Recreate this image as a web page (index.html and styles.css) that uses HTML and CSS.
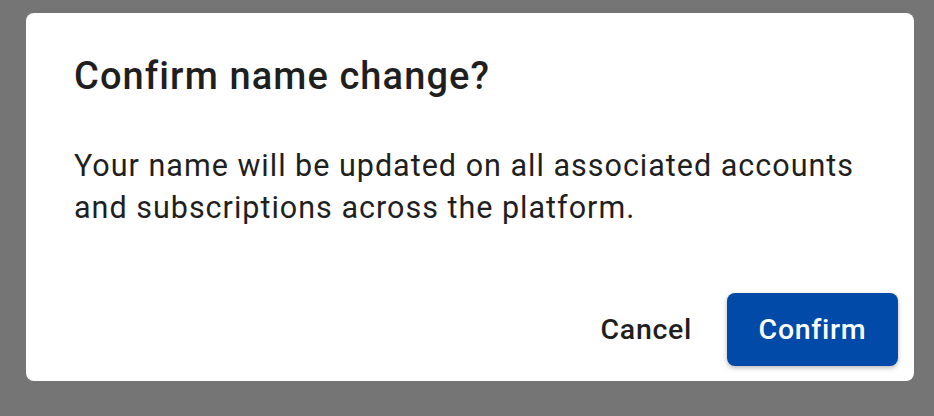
FILE: index.html
```html
<!DOCTYPE html>
<html lang="en">
<head>
<meta charset="utf-8">
<title>Confirm name change</title>
<link rel="stylesheet" href="styles.css">
</head>
<body>
<div class="dialog" role="dialog" aria-labelledby="dlg-title">
  <h2 class="dialog-title" id="dlg-title">Confirm name change?</h2>
  <p class="dialog-body">Your name will be updated on all associated accounts<br>and subscriptions across the platform.</p>
  <div class="dialog-actions">
    <button class="btn btn-text" type="button">Cancel</button>
    <button class="btn btn-primary" type="button">Confirm</button>
  </div>
</div>
</body>
</html>
```
FILE: styles.css
```css
html, body {
  margin: 0;
  height: 100%;
}
body {
  background: #757575;
  font-family: Roboto, "Liberation Sans", sans-serif;
  color: #1f1f1f;
  padding: 13px 20px 0 26px;
  box-sizing: border-box;
}
.dialog {
  background: #ffffff;
  border-radius: 8px;
  width: 888px;
  height: 368px;
  box-sizing: border-box;
  padding: 40px 16px 15px 48px;
  display: flex;
  flex-direction: column;
}
.dialog-title {
  margin: 0;
  font-size: 38px;
  line-height: 46px;
  font-weight: 500;
  letter-spacing: 1.1px;
  color: #1f1f1f;
}
.dialog-body {
  margin: 46px 0 0;
  font-size: 30.5px;
  line-height: 42px;
  font-weight: 400;
  letter-spacing: 1px;
  color: #1f1f1f;
}
.dialog-actions {
  margin-top: auto;
  display: flex;
  justify-content: flex-end;
  align-items: center;
  gap: 12px;
}
.btn {
  font-family: Roboto, "Liberation Sans", sans-serif;
  font-size: 28.5px;
  font-weight: 500;
  height: 73px;
  border: none;
  border-radius: 8px;
  cursor: pointer;
  letter-spacing: 0.7px;
}
.btn-text {
  background: transparent;
  color: #1f1f1f;
  padding: 0 23px;
}
.btn-primary {
  background: #014aa8;
  color: #ffffff;
  width: 171px;
  padding: 0;
  box-shadow: 0 2px 5px rgba(0, 0, 0, 0.28);
}
```
